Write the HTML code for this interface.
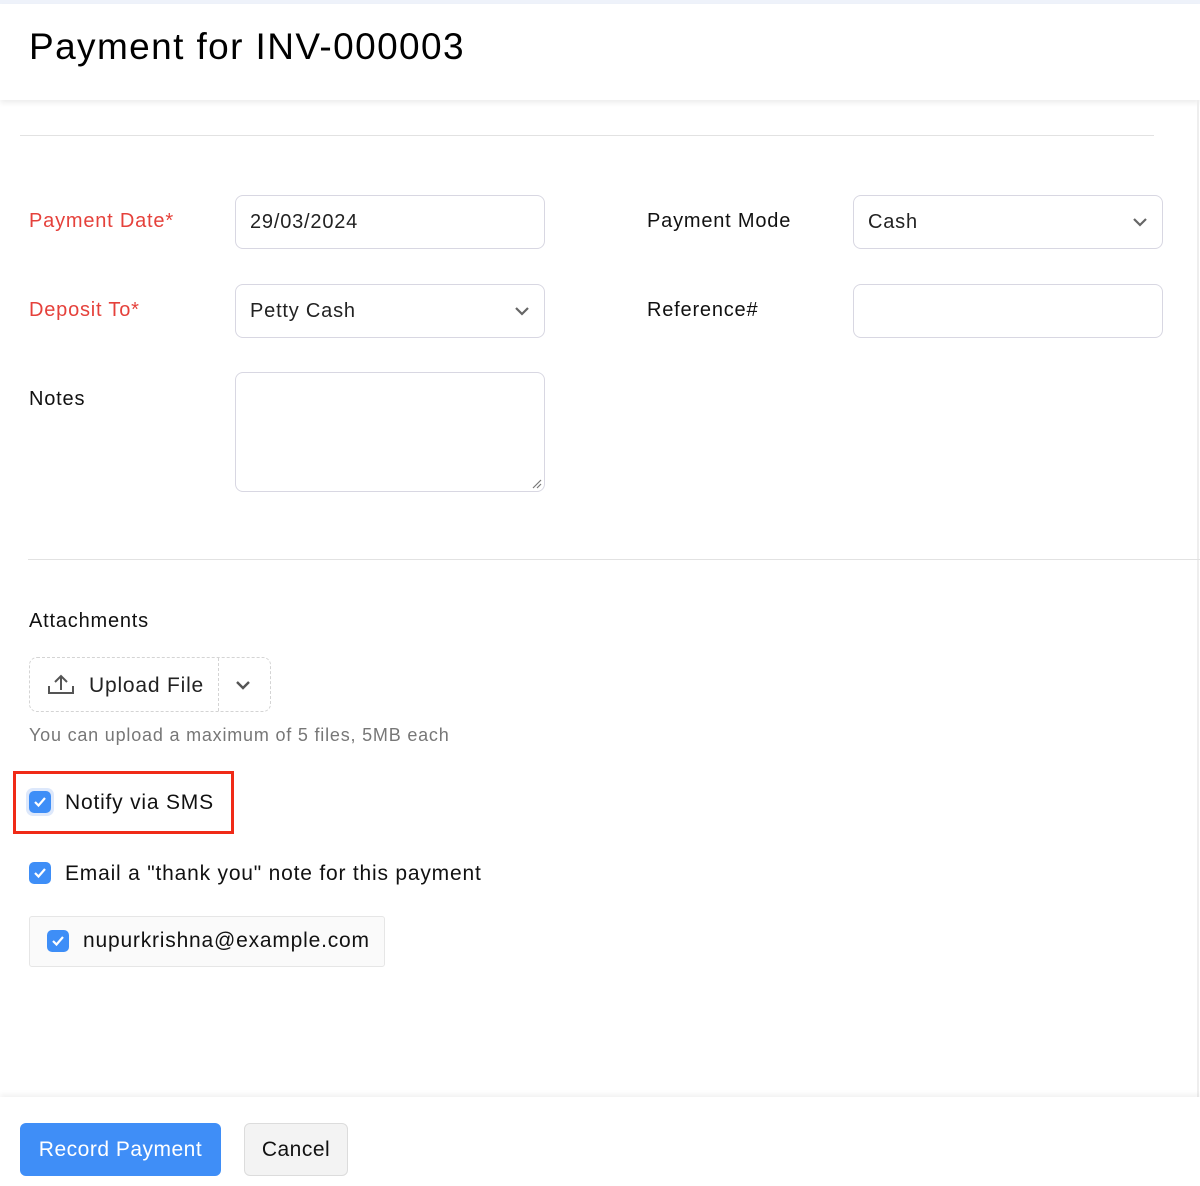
<!DOCTYPE html>
<html><head><meta charset="utf-8"><style>
*{box-sizing:border-box;margin:0;padding:0}
body{width:1200px;height:1186px;background:#fff;font-family:"Liberation Sans",Arial,sans-serif;position:relative;overflow:hidden;color:#111;letter-spacing:0.8px}
.a{position:absolute}
.lbl{font-size:20px;color:#111}
.red{color:#e5413b}
.inp{position:absolute;border:1.5px solid #d8d7e2;border-radius:8px;background:#fff;font-size:20px;color:#222;padding-left:14px;display:flex;align-items:center}
.cb{position:absolute;width:22px;height:22px;background:#3e8ef7;border-radius:5px}
.cb svg{position:absolute;left:3px;top:3px}
</style></head><body>
<div class="a" style="left:0;top:0;width:1200px;height:4px;background:#eef2fa"></div>
<div class="a" style="left:0;top:4px;width:1200px;height:96px;background:#fff;box-shadow:0 3px 5px rgba(0,0,0,0.07)"></div>
<div class="a" style="left:29px;top:26px;font-size:37px;color:#000;letter-spacing:1.4px">Payment for INV-000003</div>
<div class="a" style="left:1197px;top:100px;width:2px;height:1000px;background:#eee"></div>
<div class="a" style="left:20px;top:135px;width:1134px;height:1px;background:#e2e2e2"></div>

<div class="a lbl red" style="left:29px;top:210px">Payment Date*</div>
<div class="inp" style="left:235px;top:195px;width:310px;height:54px">29/03/2024</div>
<div class="a lbl" style="left:647px;top:210px">Payment Mode</div>
<div class="inp" style="left:853px;top:195px;width:310px;height:54px">Cash
<svg class="a" style="right:14px;top:20px" width="16" height="12" viewBox="0 0 16 12"><path d="M2 3l6 6 6-6" fill="none" stroke="#666" stroke-width="2.2"/></svg></div>

<div class="a lbl red" style="left:29px;top:299px">Deposit To*</div>
<div class="inp" style="left:235px;top:284px;width:310px;height:54px">Petty Cash
<svg class="a" style="right:14px;top:20px" width="16" height="12" viewBox="0 0 16 12"><path d="M2 3l6 6 6-6" fill="none" stroke="#666" stroke-width="2.2"/></svg></div>
<div class="a lbl" style="left:647px;top:299px">Reference#</div>
<div class="inp" style="left:853px;top:284px;width:310px;height:54px"></div>

<div class="a lbl" style="left:29px;top:388px">Notes</div>
<div class="inp" style="left:235px;top:372px;width:310px;height:120px">
<svg class="a" style="right:2px;bottom:2px" width="12" height="12" viewBox="0 0 12 12"><path d="M11 3L3 11M11 7L7 11" stroke="#777" stroke-width="1.2"/></svg></div>

<div class="a" style="left:28px;top:559px;width:1172px;height:1px;background:#e2e2e2"></div>
<div class="a lbl" style="left:29px;top:610px">Attachments</div>
<div class="a" style="left:29px;top:657px;width:242px;height:55px;border:1.5px dashed #d4d4d4;border-radius:8px"></div>
<div class="a" style="left:218px;top:658px;width:0;height:53px;border-left:1.5px dashed #d4d4d4"></div>
<svg class="a" style="left:47px;top:673px" width="28" height="24" viewBox="0 0 28 24"><path d="M2 13v7h24v-7M14 17V3M8 9l6-6 6 6" fill="none" stroke="#555" stroke-width="2"/></svg>
<div class="a" style="left:89px;top:674px;font-size:21px;color:#222">Upload File</div>
<svg class="a" style="left:234px;top:679px" width="18" height="12" viewBox="0 0 18 12"><path d="M3 3l6 6 6-6" fill="none" stroke="#555" stroke-width="2.4"/></svg>
<div class="a" style="left:29px;top:725px;font-size:18px;color:#777">You can upload a maximum of 5 files, 5MB each</div>

<div class="a" style="left:13px;top:771px;width:221px;height:63px;border:3px solid #f02a17"></div>
<div class="a" style="left:26px;top:788px;width:28px;height:28px;border-radius:7px;background:#dde8fb"></div>
<div class="cb" style="left:29px;top:791px"><svg width="16" height="16" viewBox="0 0 16 16"><path d="M3 8l3.5 3.5L13 4" fill="none" stroke="#fff" stroke-width="2.2"/></svg></div>
<div class="a" style="left:65px;top:791px;font-size:21px;color:#111">Notify via SMS</div>

<div class="cb" style="left:29px;top:862px"><svg width="16" height="16" viewBox="0 0 16 16"><path d="M3 8l3.5 3.5L13 4" fill="none" stroke="#fff" stroke-width="2.2"/></svg></div>
<div class="a" style="left:65px;top:862px;font-size:21px;color:#111">Email a "thank you" note for this payment</div>

<div class="a" style="left:29px;top:916px;width:356px;height:51px;border:1.5px solid #e6e6e6;border-radius:3px;background:#fafafa"></div>
<div class="cb" style="left:47px;top:930px"><svg width="16" height="16" viewBox="0 0 16 16"><path d="M3 8l3.5 3.5L13 4" fill="none" stroke="#fff" stroke-width="2.2"/></svg></div>
<div class="a" style="left:83px;top:929px;font-size:21px;color:#111">nupurkrishna@example.com</div>

<div class="a" style="left:0;top:1097px;width:1200px;height:89px;background:#fff;box-shadow:0 -3px 5px rgba(0,0,0,0.05)"></div>
<div class="a" style="left:20px;top:1123px;width:201px;height:53px;background:#3f8ef7;border-radius:6px;color:#fff;font-size:21px;display:flex;align-items:center;justify-content:center;letter-spacing:0.5px">Record Payment</div>
<div class="a" style="left:244px;top:1123px;width:104px;height:53px;background:#f3f3f3;border:1.5px solid #dcdcdc;border-radius:6px;color:#111;font-size:21px;display:flex;align-items:center;justify-content:center;letter-spacing:0.5px">Cancel</div>
</body></html>
